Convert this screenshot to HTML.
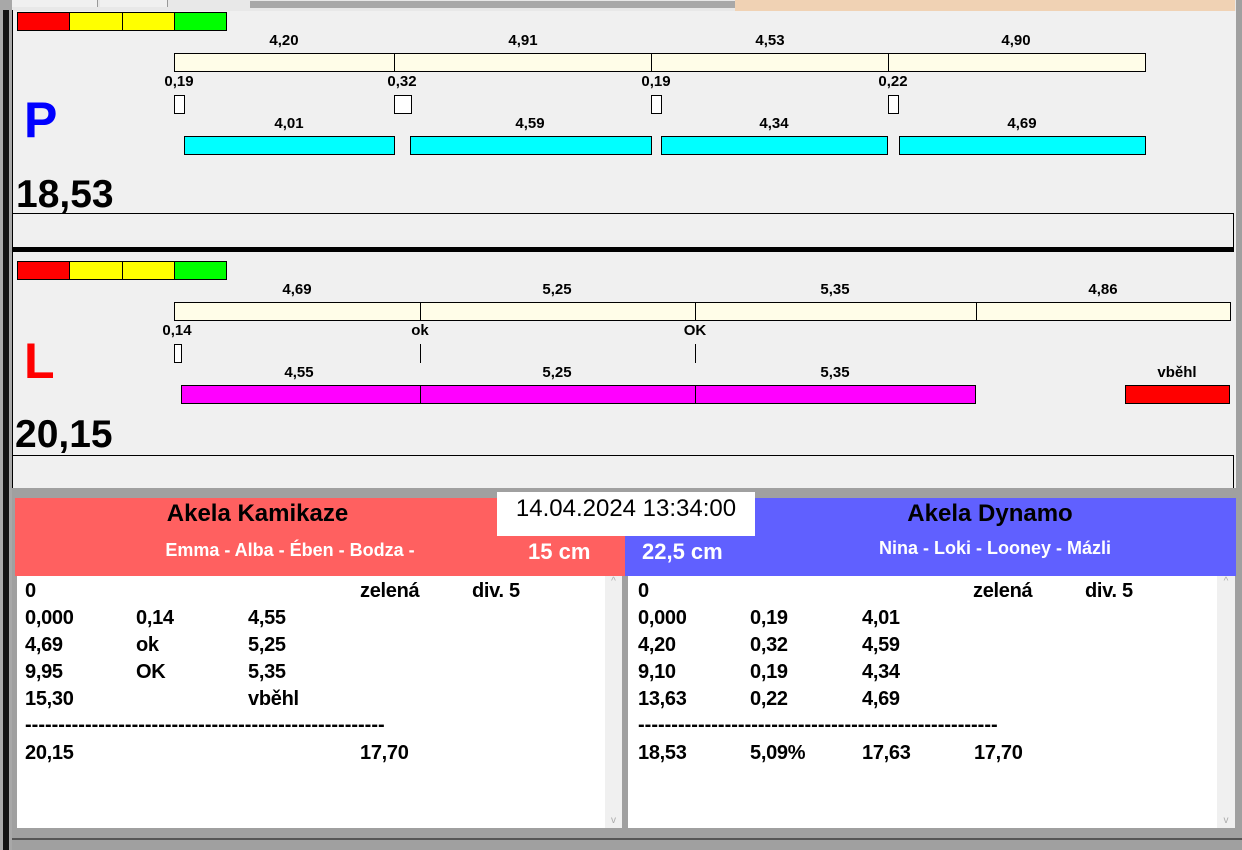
<!DOCTYPE html>
<html><head><meta charset="utf-8"><style>
*{margin:0;padding:0;box-sizing:border-box}
body{width:1242px;height:850px;overflow:hidden;background:#f0f0f0;font-family:"Liberation Sans",Arial,sans-serif;position:relative}
.a{position:absolute}
.b{position:absolute;border:1px solid #000}
.l{position:absolute;font-weight:bold;font-size:15px;transform:translateX(-50%);white-space:nowrap;line-height:15px}
.t{position:absolute;font-weight:bold;font-size:20px;line-height:22px;white-space:nowrap;letter-spacing:-0.3px}
.d{position:absolute;font-weight:bold;font-size:20px;line-height:22px;white-space:nowrap;letter-spacing:0;font-variant-ligatures:none}
</style></head><body>
<div class="a" style="left:0;top:0;width:1242px;height:11px;background:#e8e8e8"></div>
<div class="a" style="left:10px;top:0;width:88px;height:7px;background:#f0f0f0;border-right:1px solid #999"></div>
<div class="a" style="left:100px;top:0;width:68px;height:7px;background:#f0f0f0;border-right:1px solid #999"></div>
<div class="a" style="left:250px;top:1px;width:485px;height:7px;background:#a8a8a8"></div>
<div class="a" style="left:735px;top:0;width:500px;height:11px;background:#f0d2b4"></div>
<div class="a" style="left:1236px;top:0;width:6px;height:850px;background:#a0a0a0"></div>
<div class="a" style="left:0;top:0;width:12px;height:850px;background:#a8a8a8"></div>
<div class="a" style="left:3px;top:10px;width:6px;height:840px;background:#111"></div>
<div class="a" style="left:12px;top:10px;width:1px;height:478px;background:#000"></div>

<div class="b" style="left:17px;top:12px;width:53px;height:19px;background:#f00"></div>
<div class="b" style="left:69px;top:12px;width:54px;height:19px;background:#ff0"></div>
<div class="b" style="left:122px;top:12px;width:53px;height:19px;background:#ff0"></div>
<div class="b" style="left:174px;top:12px;width:53px;height:19px;background:#0f0"></div>

<div class="b" style="left:174px;top:53px;width:221px;height:19px;background:#fffde8"></div>
<div class="b" style="left:394px;top:53px;width:258px;height:19px;background:#fffde8"></div>
<div class="b" style="left:651px;top:53px;width:238px;height:19px;background:#fffde8"></div>
<div class="b" style="left:888px;top:53px;width:258px;height:19px;background:#fffde8"></div>
<div class="l" style="left:284px;top:33px">4,20</div>
<div class="l" style="left:523px;top:33px">4,91</div>
<div class="l" style="left:770px;top:33px">4,53</div>
<div class="l" style="left:1016px;top:33px">4,90</div>
<div class="l" style="left:179px;top:74px">0,19</div>
<div class="l" style="left:402px;top:74px">0,32</div>
<div class="l" style="left:656px;top:74px">0,19</div>
<div class="l" style="left:893px;top:74px">0,22</div>
<div class="b" style="left:174px;top:95px;width:11px;height:19px;background:#fff"></div>
<div class="b" style="left:394px;top:95px;width:18px;height:19px;background:#fff"></div>
<div class="b" style="left:651px;top:95px;width:11px;height:19px;background:#fff"></div>
<div class="b" style="left:888px;top:95px;width:11px;height:19px;background:#fff"></div>
<div class="l" style="left:289px;top:116px">4,01</div>
<div class="l" style="left:530px;top:116px">4,59</div>
<div class="l" style="left:774px;top:116px">4,34</div>
<div class="l" style="left:1022px;top:116px">4,69</div>
<div class="b" style="left:184px;top:136px;width:211px;height:19px;background:#0ff"></div>
<div class="b" style="left:410px;top:136px;width:242px;height:19px;background:#0ff"></div>
<div class="b" style="left:661px;top:136px;width:227px;height:19px;background:#0ff"></div>
<div class="b" style="left:899px;top:136px;width:247px;height:19px;background:#0ff"></div>
<div class="a" style="left:24px;top:92px;font-weight:bold;font-size:50px;color:#00f;line-height:56px">P</div>
<div class="a" style="left:16px;top:174px;font-weight:bold;font-size:39px;line-height:42px">18,53</div>
<div class="a" style="left:12px;top:213px;width:1222px;height:1px;background:#000"></div>
<div class="a" style="left:1233px;top:213px;width:1px;height:34px;background:#000"></div>
<div class="a" style="left:12px;top:247px;width:1222px;height:5px;background:#000"></div>

<div class="b" style="left:17px;top:261px;width:53px;height:19px;background:#f00"></div>
<div class="b" style="left:69px;top:261px;width:54px;height:19px;background:#ff0"></div>
<div class="b" style="left:122px;top:261px;width:53px;height:19px;background:#ff0"></div>
<div class="b" style="left:174px;top:261px;width:53px;height:19px;background:#0f0"></div>
<div class="b" style="left:174px;top:302px;width:247px;height:19px;background:#fffde8"></div>
<div class="b" style="left:420px;top:302px;width:276px;height:19px;background:#fffde8"></div>
<div class="b" style="left:695px;top:302px;width:282px;height:19px;background:#fffde8"></div>
<div class="b" style="left:976px;top:302px;width:255px;height:19px;background:#fffde8"></div>
<div class="l" style="left:297px;top:282px">4,69</div>
<div class="l" style="left:557px;top:282px">5,25</div>
<div class="l" style="left:835px;top:282px">5,35</div>
<div class="l" style="left:1103px;top:282px">4,86</div>
<div class="l" style="left:177px;top:323px">0,14</div>
<div class="l" style="left:420px;top:323px">ok</div>
<div class="l" style="left:695px;top:323px">OK</div>
<div class="b" style="left:174px;top:344px;width:8px;height:19px;background:#fff"></div>
<div class="a" style="left:420px;top:344px;width:1px;height:19px;background:#000"></div>
<div class="a" style="left:695px;top:344px;width:1px;height:19px;background:#000"></div>
<div class="l" style="left:299px;top:365px">4,55</div>
<div class="l" style="left:557px;top:365px">5,25</div>
<div class="l" style="left:835px;top:365px">5,35</div>
<div class="l" style="left:1177px;top:365px">vběhl</div>
<div class="b" style="left:181px;top:385px;width:240px;height:19px;background:#f0f"></div>
<div class="b" style="left:420px;top:385px;width:276px;height:19px;background:#f0f"></div>
<div class="b" style="left:695px;top:385px;width:281px;height:19px;background:#f0f"></div>
<div class="b" style="left:1125px;top:385px;width:105px;height:19px;background:#f00"></div>
<div class="a" style="left:24px;top:333px;font-weight:bold;font-size:50px;color:#f00;line-height:56px">L</div>
<div class="a" style="left:15px;top:414px;font-weight:bold;font-size:39px;line-height:42px">20,15</div>
<div class="a" style="left:12px;top:455px;width:1222px;height:1px;background:#000"></div>
<div class="a" style="left:1233px;top:455px;width:1px;height:33px;background:#000"></div>

<div class="a" style="left:12px;top:488px;width:1230px;height:362px;background:#a0a0a0"></div>
<div class="a" style="left:15px;top:498px;width:610px;height:78px;background:#ff6060"></div>
<div class="a" style="left:625px;top:498px;width:611px;height:78px;background:#6060ff"></div>
<div class="a" style="left:15px;top:500px;width:485px;text-align:center;font-weight:bold;font-size:24px;line-height:28px">Akela Kamikaze</div>
<div class="a" style="left:15px;top:539px;width:560px;text-align:center;font-weight:bold;font-size:18px;color:#fff;line-height:22px;padding-right:10px">Emma - Alba - Ében - Bodza -</div>
<div class="a" style="left:528px;top:539px;font-weight:bold;font-size:22px;color:#fff;line-height:26px">15 cm</div>
<div class="a" style="left:755px;top:500px;width:470px;text-align:center;font-weight:bold;font-size:24px;line-height:28px">Akela Dynamo</div>
<div class="a" style="left:642px;top:539px;font-weight:bold;font-size:22px;color:#fff;line-height:26px">22,5 cm</div>
<div class="a" style="left:760px;top:537px;width:470px;text-align:center;font-weight:bold;font-size:18px;color:#fff;line-height:22px">Nina - Loki - Looney - Mázli</div>
<div class="a" style="left:497px;top:492px;width:258px;height:44px;background:#fff;font-size:24px;line-height:34px;text-align:center">14.04.2024 13:34:00</div>

<div class="a" style="left:17px;top:576px;width:589px;height:252px;background:#fff"></div>
<div class="a" style="left:605px;top:576px;width:17px;height:252px;background:#f0f0f0;color:#aaa;font-size:10px;text-align:center">^<div style="position:absolute;bottom:2px;width:17px">v</div></div>
<div class="a" style="left:628px;top:576px;width:590px;height:252px;background:#fff"></div>
<div class="a" style="left:1217px;top:576px;width:18px;height:252px;background:#f0f0f0;color:#aaa;font-size:10px;text-align:center">^<div style="position:absolute;bottom:2px;width:18px">v</div></div>
<div class="a" style="left:12px;top:838px;width:1230px;height:2px;background:#555"></div>

<div class="t" style="left:25px;top:580px">0</div><div class="t" style="left:360px;top:580px">zelená</div><div class="t" style="left:472px;top:580px">div. 5</div>
<div class="t" style="left:25px;top:607px">0,000</div><div class="t" style="left:136px;top:607px">0,14</div><div class="t" style="left:248px;top:607px">4,55</div>
<div class="t" style="left:25px;top:634px">4,69</div><div class="t" style="left:136px;top:634px">ok</div><div class="t" style="left:248px;top:634px">5,25</div>
<div class="t" style="left:25px;top:661px">9,95</div><div class="t" style="left:136px;top:661px">OK</div><div class="t" style="left:248px;top:661px">5,35</div>
<div class="t" style="left:25px;top:688px">15,30</div><div class="t" style="left:248px;top:688px">vběhl</div>
<div class="d" style="left:25px;top:714px">------------------------------------------------------</div>
<div class="t" style="left:25px;top:742px">20,15</div><div class="t" style="left:360px;top:742px">17,70</div>

<div class="t" style="left:638px;top:580px">0</div><div class="t" style="left:973px;top:580px">zelená</div><div class="t" style="left:1085px;top:580px">div. 5</div>
<div class="t" style="left:638px;top:607px">0,000</div><div class="t" style="left:750px;top:607px">0,19</div><div class="t" style="left:862px;top:607px">4,01</div>
<div class="t" style="left:638px;top:634px">4,20</div><div class="t" style="left:750px;top:634px">0,32</div><div class="t" style="left:862px;top:634px">4,59</div>
<div class="t" style="left:638px;top:661px">9,10</div><div class="t" style="left:750px;top:661px">0,19</div><div class="t" style="left:862px;top:661px">4,34</div>
<div class="t" style="left:638px;top:688px">13,63</div><div class="t" style="left:750px;top:688px">0,22</div><div class="t" style="left:862px;top:688px">4,69</div>
<div class="d" style="left:638px;top:714px">------------------------------------------------------</div>
<div class="t" style="left:638px;top:742px">18,53</div><div class="t" style="left:750px;top:742px">5,09%</div><div class="t" style="left:862px;top:742px">17,63</div><div class="t" style="left:974px;top:742px">17,70</div>
</body></html>
